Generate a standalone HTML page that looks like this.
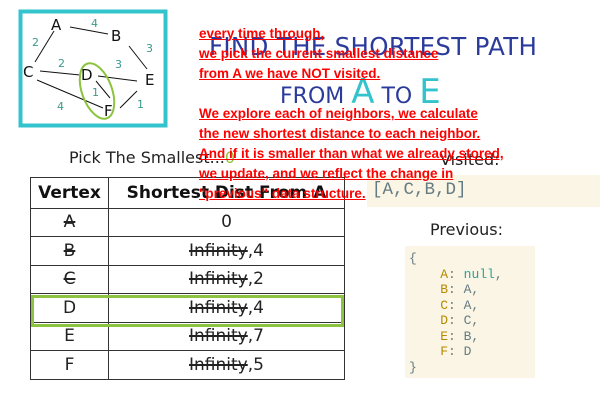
<!DOCTYPE html>
<html><head><meta charset="utf-8"><style>
body{margin:0;width:600px;height:400px;background:#fff;position:relative;overflow:hidden;font-family:"DejaVu Sans","Liberation Sans",sans-serif}
.a{position:absolute;white-space:nowrap}
.red{position:absolute;left:199px;top:24px;color:#f00;font-family:"Liberation Sans",sans-serif;font-weight:bold;font-size:13.5px;line-height:20px;text-decoration:underline;white-space:nowrap}
table{position:absolute;left:30px;top:177px;border-collapse:collapse;font-size:17px}
td{border:1.5px solid #333;height:27.5px;text-align:center;padding:0;color:#222}
th{border:1.5px solid #333;height:27.5px;font-size:17px;color:#111}
s{text-decoration-thickness:1.5px}
.code{position:absolute;font-family:"Liberation Mono",monospace;background:#faf5e4;color:#657b83}
.k{color:#b58900}.n{color:#2aa198}
</style></head><body>
<svg class="a" style="left:0;top:0" width="180" height="135">
<rect x="20.5" y="11.5" width="145" height="114" fill="none" stroke="#33c3cc" stroke-width="4"/>
<g stroke="#111" stroke-width="1" fill="none">
<line x1="70" y1="27" x2="108" y2="34"/><line x1="54" y1="31" x2="35" y2="62"/>
<line x1="129" y1="46" x2="147" y2="69"/><line x1="40" y1="71" x2="80" y2="75"/>
<line x1="98" y1="76" x2="137" y2="81"/><line x1="37" y1="80" x2="103" y2="108"/>
<line x1="96" y1="81" x2="110" y2="98"/><line x1="120" y1="108" x2="137" y2="91"/>
</g>
<ellipse cx="97" cy="91" rx="15" ry="29" transform="rotate(-20 97 91)" fill="none" stroke="#8cc43f" stroke-width="2"/>
<g font-family="DejaVu Sans,sans-serif" font-size="15" fill="#111">
<text x="51" y="30">A</text><text x="111" y="41">B</text><text x="23" y="77">C</text>
<text x="81" y="80">D</text><text x="145" y="85">E</text><text x="104" y="116">F</text></g>
<g font-family="DejaVu Sans,sans-serif" font-size="11" fill="#3a9a8a">
<text x="91" y="27">4</text><text x="32" y="46">2</text><text x="146" y="52">3</text>
<text x="58" y="67">2</text><text x="115" y="68">3</text><text x="92" y="96">1</text>
<text x="57" y="110">4</text><text x="137" y="108">1</text></g>
</svg>
<div class="a" style="left:209px;top:32px;font-size:24.5px;color:#2b3b9c;letter-spacing:0.3px">FIND THE SHORTEST PATH</div>
<div class="a" style="left:280px;top:72px;font-size:22px;color:#2b3b9c">FROM <span style="font-size:34px;color:#33c3cc">A</span> TO <span style="font-size:34px;color:#33c3cc">E</span></div>
<div class="a" style="left:69px;top:148px;font-size:16px;color:#222">Pick The Smallest...<span style="color:#8cc43f">0</span></div>
<table>
<tr><th style="width:75px">Vertex</th><th style="width:233px">Shortest Dist From A</th></tr>
<tr><td><s>A</s></td><td>0</td></tr>
<tr><td><s>B</s></td><td><s>Infinity</s>,4</td></tr>
<tr><td><s>C</s></td><td><s>Infinity</s>,2</td></tr>
<tr><td>D</td><td><s>Infinity</s>,4</td></tr>
<tr><td>E</td><td><s>Infinity</s>,7</td></tr>
<tr><td>F</td><td><s>Infinity</s>,5</td></tr>
</table>
<div class="a" style="left:31px;top:295px;width:307px;height:26px;border:3px solid #8cc43f"></div>
<div class="a" style="left:440px;top:150px;font-size:16px;color:#222">Visited:</div>
<div class="code" style="left:367px;top:175px;width:233px;height:32px;font-size:17.5px;line-height:30px;padding-left:5px;box-sizing:border-box">[A,C,B,D]</div>
<div class="a" style="left:430px;top:220px;font-size:16px;color:#222">Previous:</div>
<div class="code" style="left:405px;top:246px;width:130px;height:132px;font-size:13px;line-height:15.5px;padding:5px 0 0 4px;box-sizing:border-box;white-space:pre">{
    <span class="k">A</span>: <span class="n">null</span>,
    <span class="k">B</span>: A,
    <span class="k">C</span>: A,
    <span class="k">D</span>: C,
    <span class="k">E</span>: B,
    <span class="k">F</span>: D
}</div>
<div class="red">every time through,<br>we pick the current smallest distance<br>from A we have NOT visited.<br><br>We explore each of neighbors, we calculate<br>the new shortest distance to each neighbor.<br>And if it is smaller than what we already stored,<br>we update, and we reflect the change in<br>"previous" data structure.</div>
</body></html>
